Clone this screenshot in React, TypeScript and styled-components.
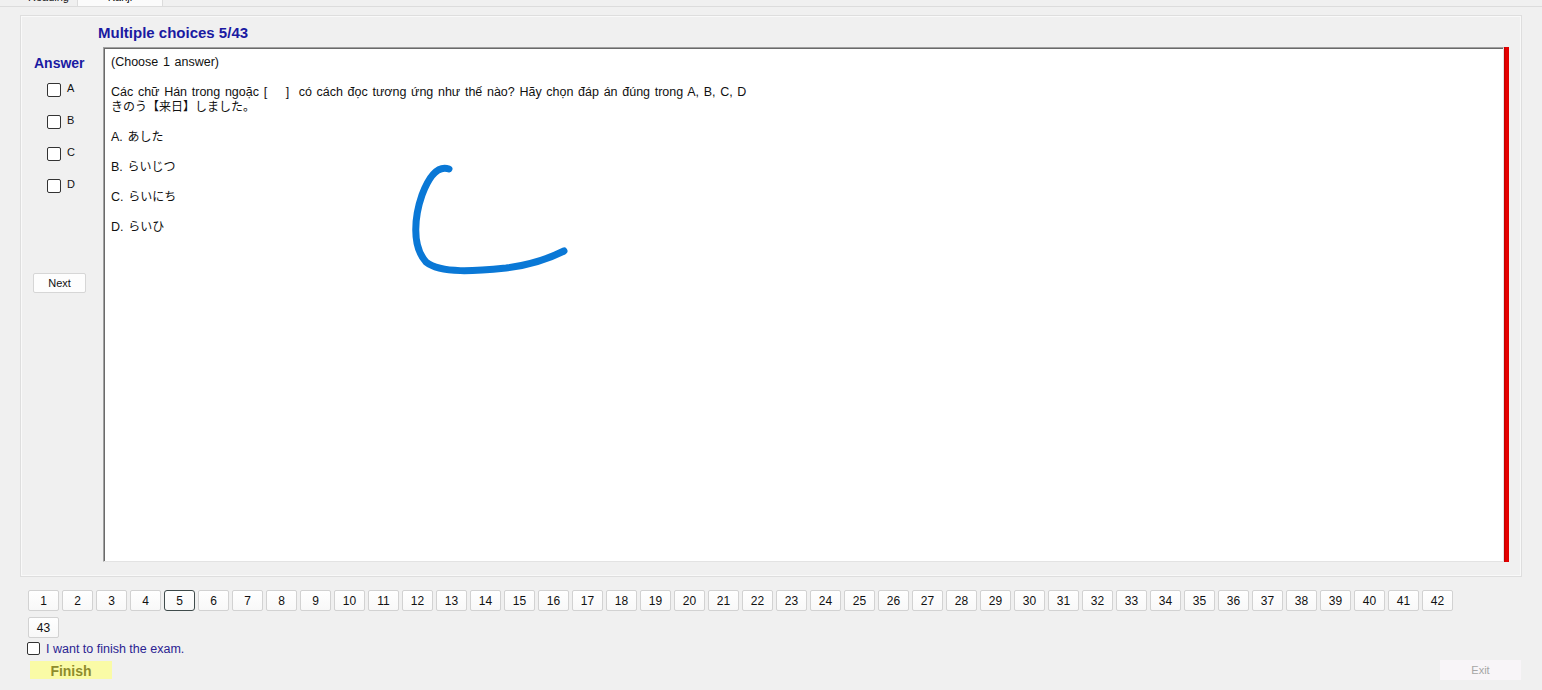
import styled, { createGlobalStyle, css } from "styled-components";

const GlobalStyle = createGlobalStyle`
    html, body {
        margin: 0;
        padding: 0;
        background: #f0f0f0;
    }
    body {
        font-family: "Liberation Sans", "Noto Sans CJK JP", Arial, sans-serif;
        color: #111;
    }
    #root {
        width: 1542px;
        height: 690px;
        overflow: hidden;
    }
`;

const options = ["A", "B", "C", "D"];
const choices = ["あした", "らいじつ", "らいにち", "らいひ"];
const pages = Array.from({ length: 43 }, (_, i) => i + 1);
const current = 5;

export default function App() {
    return (
        <Page>
            <GlobalStyle />
            <TabStrip>
                <Tab>Reading</Tab>
                <Tab active>Kanji</Tab>
            </TabStrip>

            <MainPanel>
                <Title>Multiple choices 5/{pages.length}</Title>
                <Body>
                    <AnswerColumn>
                        <AnswerTitle>Answer</AnswerTitle>
                        <OptionList>
                            {options.map((o) => (
                                <OptionRow key={o}>
                                    <Box />
                                    <OptionLabel>{o}</OptionLabel>
                                </OptionRow>
                            ))}
                        </OptionList>
                        <NextButton>Next</NextButton>
                    </AnswerColumn>

                    <QuestionBox>
                        <Para>(Choose 1 answer)</Para>
                        <Para>
                            Các chữ Hán trong ngoặc [ &nbsp; &nbsp;] &nbsp;có cách đọc tương ứng như thế nào? Hãy chọn đáp án đúng trong A, B, C, D
                            <br />
                            <Jp>きのう【来日】しました。</Jp>
                        </Para>
                        {choices.map((c, i) => (
                            <Para key={c}>
                                {options[i]}. <Jp>{c}</Jp>
                            </Para>
                        ))}

                        {/* pen stroke drawn over the question */}
                        <Ink width="170" height="120" viewBox="0 0 170 120">
                            <path
                                d="M43 8 C 31 4, 22 18, 16 34 C 9 54, 5 84, 20 101 C 35 113, 70 110, 100 107 C 124 104, 144 97, 158 90"
                                fill="none"
                                stroke="#0a78d6"
                                strokeWidth="7"
                                strokeLinecap="round"
                                strokeLinejoin="round"
                            />
                        </Ink>
                    </QuestionBox>
                    <ScrollMark />
                </Body>
            </MainPanel>

            <Pager>
                {pages.map((n) => (
                    <PageButton key={n} active={n === current}>
                        {n}
                    </PageButton>
                ))}
            </Pager>

            <ConfirmRow>
                <Box small />
                <ConfirmLabel>I want to finish the exam.</ConfirmLabel>
            </ConfirmRow>

            <Footer>
                <FinishButton>Finish</FinishButton>
                <ExitButton>Exit</ExitButton>
            </Footer>
        </Page>
    );
}

const Page = styled.div`
    width: 1542px;
    height: 690px;
    display: flex;
    flex-direction: column;
`

const TabStrip = styled.div`
    height: 6px;
    overflow: hidden;
    border-bottom: 1px solid #dcdcdc;
    display: flex;
    align-items: flex-end;
    padding-left: 22px;
`

const Tab = styled.div<{ active?: boolean }>`
    height: 20px;
    display: flex;
    align-items: flex-end;
    justify-content: center;
    font-size: 11px;
    line-height: 12px;
    padding: 0 6px 3px;
    box-sizing: border-box;
    ${(p) => p.active && css`
        width: 86px;
        margin-left: 2px;
        background: #fbfbfb;
        border: 1px solid #dcdcdc;
        border-bottom: none;
    `}
`

const MainPanel = styled.section`
    margin: 8px 20px 0 20px;
    height: 562px;
    box-sizing: border-box;
    border: 1px solid #dedede;
    box-shadow: inset 0 0 0 1px #f9f9f9;
    display: flex;
    flex-direction: column;
`

const Title = styled.h2`
    margin: 9px 0 0 77px;
    font-size: 15px;
    line-height: 15px;
    font-weight: bold;
    color: #1a1aa2;
`

const Body = styled.div`
    margin: 7px 12px 0 0;
    display: flex;
    height: 515px;
`

const AnswerColumn = styled.div`
    width: 82px;
    flex-shrink: 0;
    box-sizing: border-box;
    padding: 8px 0 0 13px;
    display: flex;
    flex-direction: column;
    align-items: flex-start;
`

const AnswerTitle = styled.div`
    font-size: 14px;
    line-height: 16px;
    font-weight: bold;
    color: #1a1aa2;
`

const OptionList = styled.div`
    margin: 11px 0 0 13px;
    display: flex;
    flex-direction: column;
    gap: 16px;
`

const OptionRow = styled.label`
    height: 16px;
    display: flex;
    align-items: center;
`

const Box = styled.span<{ small?: boolean }>`
    display: inline-block;
    width: ${(p) => (p.small ? 11 : 12)}px;
    height: ${(p) => (p.small ? 11 : 12)}px;
    border: 1px solid #333;
    border-radius: 2px;
    background: #fff;
    flex-shrink: 0;
`

const OptionLabel = styled.span`
    margin-left: 6px;
    font-size: 11px;
    margin-top: -4px;
`

const NextButton = styled.button`
    margin: 79px 0 0 -1px;
    width: 53px;
    height: 20px;
    padding: 0;
    font-family: inherit;
    font-size: 11px;
    color: #111;
    background: #fdfdfd;
    border: 1px solid #d6d6d6;
    border-radius: 2px;
`

const QuestionBox = styled.div`
    position: relative;
    flex: 1;
    background: #fff;
    box-sizing: border-box;
    border: 1px solid;
    border-color: #a0a0a0 #e3e3e3 #e3e3e3 #a0a0a0;
    box-shadow: inset 1px 1px 0 #6a6a6a;
    padding: 7px 8px 0 7px;
    font-size: 12.5px;
    line-height: 15px;
    word-spacing: 1.2px;
`

const Para = styled.p`
    margin: 0 0 15px;
    white-space: nowrap;
`

const Jp = styled.span`
    font-size: 12px;
    word-spacing: 0;
`

const Ink = styled.svg`
    position: absolute;
    left: 302px;
    top: 113px;
`

const ScrollMark = styled.div`
    width: 5px;
    flex-shrink: 0;
    background: linear-gradient(to right, #b80000, #e80000 40%, #e00000);
`

const Pager = styled.nav`
    margin: 13px 0 0 28px;
    width: 1430px;
    display: flex;
    flex-wrap: wrap;
    gap: 6px 3px;
`

const PageButton = styled.button<{ active?: boolean }>`
    width: 31px;
    height: 21px;
    padding: 0;
    font-family: inherit;
    font-size: 12px;
    color: #111;
    background: linear-gradient(#ffffff, #f8f8f8);
    border: 1px solid ${(p) => (p.active ? "#3f4b4b" : "#d2d2d2")};
    border-radius: ${(p) => (p.active ? 3 : 2)}px;
`

const ConfirmRow = styled.label`
    margin: 2px 0 0 27px;
    height: 16px;
    display: flex;
    align-items: center;
`

const ConfirmLabel = styled.span`
    margin-left: 6px;
    margin-top: 2px;
    font-size: 12.5px;
    color: #2b2392;
`

const Footer = styled.div`
    margin-top: 4px;
    padding: 0 21px 0 30px;
    display: flex;
    justify-content: space-between;
    align-items: flex-start;
`

const FinishButton = styled.div`
    margin-top: 1px;
    width: 82px;
    height: 18px;
    background: #fafba6;
    color: #8e8c2c;
    font-size: 14px;
    font-weight: bold;
    line-height: 20px;
    text-align: center;
`

const ExitButton = styled.div`
    width: 81px;
    height: 20px;
    background: #f8f5f8;
    color: #a6a6a6;
    font-size: 11px;
    line-height: 20px;
    text-align: center;
`
